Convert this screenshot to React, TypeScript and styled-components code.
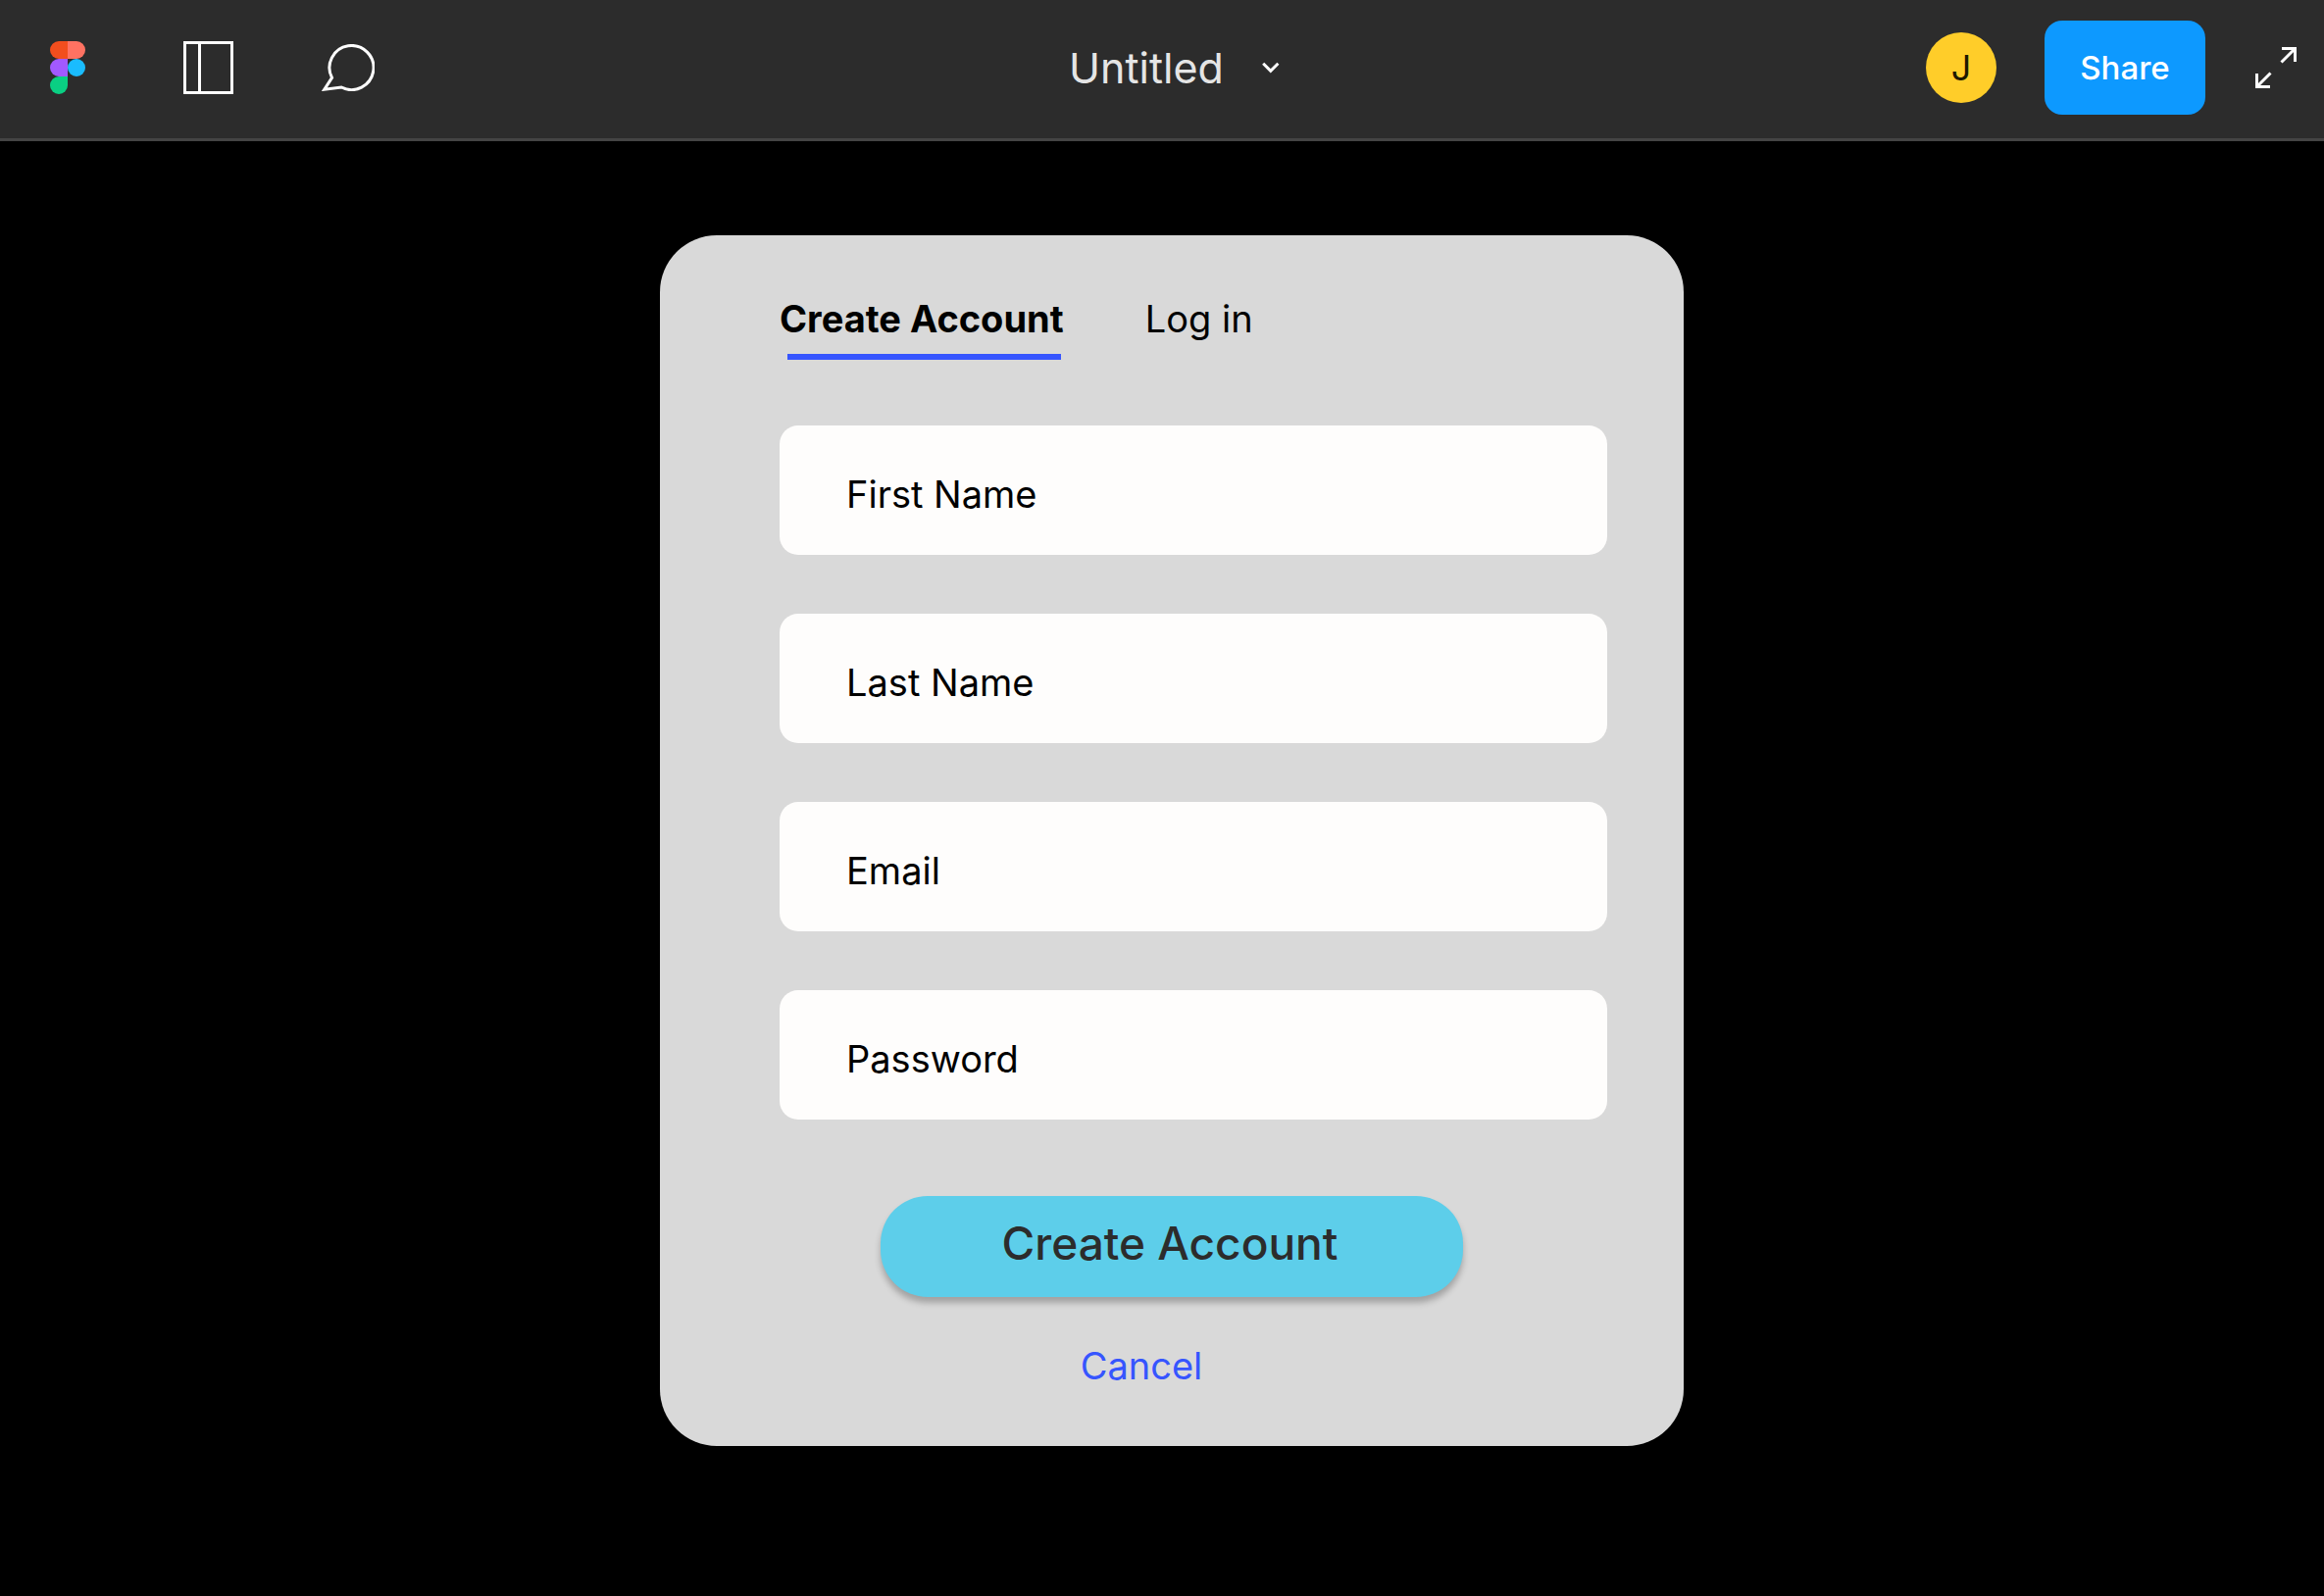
import React from "react";
import styled, { createGlobalStyle } from "styled-components";

const GlobalStyle = createGlobalStyle`
  *, *::before, *::after { box-sizing: border-box; }
  body {
    margin: 0;
    background: #000;
    font-family: Inter, "Liberation Sans", sans-serif;
  }
  button, input { font-family: inherit; }
`;

const Page = styled.div`
  display: flex;
  flex-direction: column;
  min-height: 100vh;
`;

const TopBar = styled.header`
  display: grid;
  grid-template-columns: 1fr auto 1fr;
  align-items: center;
  height: 144px;
  padding-bottom: 3px;
  background: #2c2c2c;
  border-bottom: 3px solid #444;
`;

const Tools = styled.div`
  display: flex;
  align-items: center;
  padding-left: 33px;
  gap: 71px;
`;

const Actions = styled.div`
  display: flex;
  align-items: center;
  justify-content: flex-end;
  padding-right: 24px;
`;

const PlainButton = styled.button`
  display: flex;
  align-items: center;
  justify-content: center;
  padding: 0;
  border: 0;
  background: none;
  color: #fff;
  cursor: pointer;
`;

const ToolButton = styled(PlainButton)`
  width: 72px;
  height: 72px;
`;

const TitleButton = styled(PlainButton)`
  gap: 36px;
  padding-left: 28px;
  font-size: 43px;
  line-height: 52px;
  color: #e5e5e5;
`;

const Avatar = styled(PlainButton)`
  width: 72px;
  height: 72px;
  margin-right: 49px;
  border-radius: 50%;
  background: #ffcd29;
  color: #1e1900;
  font-size: 36px;
`;

const ShareButton = styled(PlainButton)`
  min-width: 164px;
  height: 96px;
  margin-right: 47px;
  padding: 0 36px;
  border-radius: 18px;
  background: #0d99ff;
  font-size: 33px;
  font-weight: 500;
`;

const Canvas = styled.main`
  display: flex;
  justify-content: center;
  padding: 96px 0 96px 20px;
`;

const Card = styled.form`
  width: 100%;
  max-width: 1044px;
  padding: 61px 78px 58px 122px;
  border-radius: 58px;
  background: #d9d9d9;
`;

const Tabs = styled.nav`
  display: flex;
  gap: 83px;
  margin-bottom: 67px;
`;

const Tab = styled.button<{ $active?: boolean }>`
  padding: 0 0 18px;
  border: 0;
  color: #000;
  font-size: 38px;
  line-height: 48px;
  font-weight: ${(p) => (p.$active ? 700 : 400)};
  background: ${(p) =>
    p.$active
      ? "linear-gradient(#3655ff, #3655ff) 8px bottom / calc(100% - 11px) 6px no-repeat"
      : "none"};
  cursor: pointer;
`;

const Fields = styled.div`
  display: flex;
  flex-direction: column;
  gap: 60px;
`;

const Field = styled.input`
  width: 100%;
  height: 132px;
  padding: 8px 68px 0;
  border: 0;
  border-radius: 19px;
  outline: 0;
  background: #fefdfc;
  color: #000;
  font-size: 38px;
  line-height: 48px;

  &::placeholder {
    color: #000;
    opacity: 1;
  }
`;

const SubmitRow = styled.div`
  display: flex;
  flex-direction: column;
  align-items: center;
  padding-right: 44px;
  margin-top: 78px;
`;

const SubmitButton = styled.button`
  width: 594px;
  max-width: 100%;
  height: 103px;
  padding: 0 4px 8px 0;
  border: 0;
  border-radius: 48px;
  background: #5dceea;
  box-shadow: 0 6px 6px rgba(0, 0, 0, 0.25);
  color: #2c2c2c;
  font-size: 46px;
  font-weight: 500;
  cursor: pointer;
`;

const CancelLink = styled.a`
  margin: 46px 62px 0 0;
  color: #3655ff;
  font-size: 38px;
  line-height: 48px;
  text-decoration: none;
`;

const Logo = () => (
  <svg width="36" height="54" viewBox="0 0 36 54" aria-hidden="true">
    <path d="M18 0H9a9 9 0 0 0 0 18h9z" fill="#f24e1e" />
    <path d="M18 0h9a9 9 0 0 1 0 18h-9z" fill="#ff7262" />
    <path d="M18 18H9a9 9 0 0 0 0 18h9z" fill="#a259ff" />
    <circle cx="27" cy="27" r="9" fill="#1abcfe" />
    <path d="M18 36H9a9 9 0 1 0 9 9z" fill="#0acf83" />
  </svg>
);

const PanelIcon = () => (
  <svg width="51" height="54" viewBox="0 0 51 54" fill="none" stroke="#fff" strokeWidth="3" aria-hidden="true">
    <path d="M1.5 1.5h48v51h-48zM16.5 1.5v51" />
  </svg>
);

const CommentIcon = () => (
  <svg width="54" height="48" viewBox="0 0 54 48" fill="none" stroke="#fff" strokeWidth="3" aria-hidden="true">
    <path d="M10.5 34.3A22.5 22.5 0 1 1 20.2 44L2.8 46.2z" />
  </svg>
);

const ChevronIcon = () => (
  <svg width="24" height="24" viewBox="0 0 24 24" fill="none" stroke="#fff" strokeWidth="3" aria-hidden="true">
    <path d="M4.2 7.8l7.6 7.6 7.6-7.6" />
  </svg>
);

const ExpandIcon = () => (
  <svg width="50" height="50" viewBox="0 0 50 50" fill="none" stroke="#fff" strokeWidth="3" aria-hidden="true">
    <path d="M31 5.500h13.500v13.500M44 6L30.500 19.500M5.500 31v13.500H19M6 44l13.500-13.500" />
  </svg>
);

const FIELDS = [
  { name: "firstName", label: "First Name", type: "text" },
  { name: "lastName", label: "Last Name", type: "text" },
  { name: "email", label: "Email", type: "email" },
  { name: "password", label: "Password", type: "password" },
];

export default function App() {
  return (
    <Page>
      <GlobalStyle />
      <TopBar>
        <Tools>
          <ToolButton aria-label="Home">
            <Logo />
          </ToolButton>
          <ToolButton aria-label="Toggle sidebar">
            <PanelIcon />
          </ToolButton>
          <ToolButton aria-label="Comments">
            <CommentIcon />
          </ToolButton>
        </Tools>
        <TitleButton>
          <span>Untitled</span>
          <ChevronIcon />
        </TitleButton>
        <Actions>
          <Avatar aria-label="Account">J</Avatar>
          <ShareButton>Share</ShareButton>
          <PlainButton aria-label="Full screen">
            <ExpandIcon />
          </PlainButton>
        </Actions>
      </TopBar>
      <Canvas>
        <Card onSubmit={(e) => e.preventDefault()}>
          <Tabs>
            <Tab type="button" $active>
              Create Account
            </Tab>
            <Tab type="button">Log in</Tab>
          </Tabs>
          <Fields>
            {FIELDS.map((f) => (
              <Field key={f.name} name={f.name} type={f.type} placeholder={f.label} aria-label={f.label} />
            ))}
          </Fields>
          <SubmitRow>
            <SubmitButton type="submit">Create Account</SubmitButton>
            <CancelLink href="#">Cancel</CancelLink>
          </SubmitRow>
        </Card>
      </Canvas>
    </Page>
  );
}
